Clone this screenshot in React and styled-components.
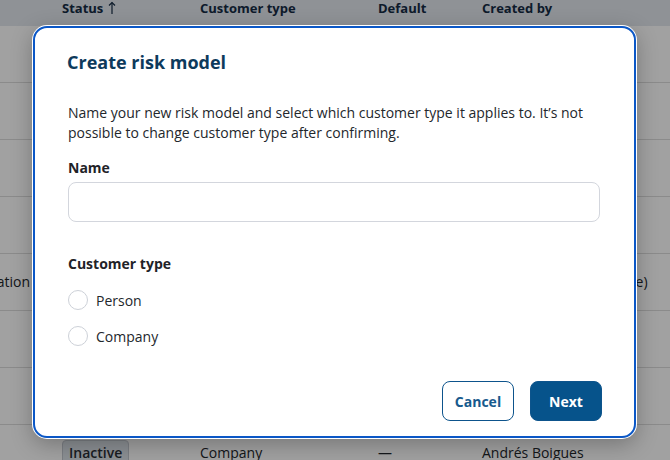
import React from "react";
import styled, { createGlobalStyle } from "styled-components";

const Global = createGlobalStyle`
  html, body { margin: 0; padding: 0; }
  body {
    width: 670px;
    height: 460px;
    overflow: hidden;
    background: #fff;
    font-family: "Open Sans", "Noto Sans", "Liberation Sans", sans-serif;
    color: #1f2328;
  }
  * { box-sizing: border-box; }
`;

const Page = styled.div`
  position: relative;
  width: 670px;
  height: 460px;
  overflow: hidden;
`;

const Table = styled.div`
  display: flex;
  flex-direction: column;
  margin-left: -120px;
  width: 920px;
`;

const cols = "182px 138px 178px 104px 318px";

const HeaderRow = styled.div`
  display: grid;
  grid-template-columns: ${cols};
  align-items: start;
  height: 26px;
  background: #e2e7ee;
  font-size: 13px;
  font-weight: 700;
  line-height: 16px;
  color: #162c44;
`;

const HeadCell = styled.div`
  display: flex;
  align-items: center;
  gap: 5px;
  white-space: nowrap;
`;

const Row = styled.div`
  display: grid;
  grid-template-columns: ${cols};
  align-items: center;
  height: 57px;
  border-bottom: 1px solid #dcdcdc;
  font-size: 14px;
  line-height: 20px;
  color: #22262b;
`;

const Cell = styled.div`
  white-space: nowrap;
  text-align: ${(p) => (p.$lead ? "right" : "left")};
  padding-right: ${(p) => (p.$lead ? "32px" : "0")};
`;

const Badge = styled.span`
  display: inline-block;
  padding: 2px 6px;
  border: 1px solid #c3c8d0;
  border-radius: 4px;
  background: #dde2e9;
  font-size: 14px;
  font-weight: 600;
  line-height: 20px;
  color: #2a2f36;
`;

const Scrim = styled.div`
  position: absolute;
  inset: 0;
  background: rgba(0, 0, 0, 0.37);
`;

const Dialog = styled.div`
  position: absolute;
  left: 33px;
  top: 26px;
  width: 603px;
  height: 412px;
  background: #fff;
  border: 2px solid #0b57c6;
  border-radius: 14px;
  box-shadow: 0 0 0 1px #fff, 0 6px 22px rgba(0, 0, 0, 0.28);
  padding: 22px 34px 15px 32px;
  display: flex;
  flex-direction: column;
`;

const Title = styled.h2`
  margin: 0;
  font-size: 18px;
  line-height: 24px;
  font-weight: 700;
  color: #0d3a5c;
`;

const Intro = styled.p`
  margin: 29px -30px 0 1px;
  font-size: 14px;
  line-height: 20px;
  color: #23272c;
`;

const Label = styled.div`
  font-size: 14px;
  line-height: 20px;
  font-weight: 700;
  color: #1f2328;
  margin-top: ${(p) => p.$top}px;
  margin-left: 1px;
`;

const Input = styled.input`
  margin: 4px 0 0 1px;
  width: calc(100% - 1px);
  height: 40px;
  border: 1px solid #d3d6dd;
  border-radius: 8px;
  padding: 0 12px;
  font: inherit;
  font-size: 14px;
  outline: none;
`;

const RadioList = styled.div`
  display: flex;
  flex-direction: column;
  gap: 12px;
  margin: 14px 0 0 1px;
`;

const RadioRow = styled.label`
  display: flex;
  align-items: center;
  gap: 8px;
  height: 24px;
  font-size: 14px;
  color: #23272c;
`;

const RadioDot = styled.span`
  width: 20px;
  height: 20px;
  border-radius: 50%;
  border: 1px solid #cdd1d8;
  background: #fff;
`;

const Actions = styled.div`
  margin: auto -2px 0 0;
  display: flex;
  justify-content: flex-end;
  gap: 16px;
`;

const Button = styled.button`
  width: 72px;
  height: 40px;
  border-radius: 8px;
  font-family: inherit;
  font-size: 14px;
  font-weight: 700;
  cursor: pointer;
  border: 1px solid #0d548c;
  background: ${(p) => (p.$primary ? "#06538b" : "#fff")};
  color: ${(p) => (p.$primary ? "#fff" : "#175a8d")};
`;

const SortArrow = () => (
  <svg width="8" height="14" viewBox="0 0 8 14" fill="none" stroke="#162c44" strokeWidth="1.2">
    <path d="M4 13V1.5" />
    <path d="M1 4.5L4 1.5L7 4.5" />
  </svg>
);

const rows = [
  { name: "", status: null, type: "", def: "", by: "" },
  { name: "", status: null, type: "", def: "", by: "" },
  { name: "", status: null, type: "", def: "", by: "" },
  { name: "", status: null, type: "", def: "", by: "" },
  { name: "Customer verification", status: null, type: "", def: "", by: "Erika Johansson (Inactive)" },
  { name: "", status: null, type: "", def: "", by: "" },
  { name: "", status: null, type: "", def: "", by: "" },
  { name: "", status: "Inactive", type: "Company", def: "—", by: "Andrés Boigues" },
];

export default function App() {
  return (
    <Page>
      <Global />
      <Table>
        <HeaderRow>
          <HeadCell />
          <HeadCell>
            Status <SortArrow />
          </HeadCell>
          <HeadCell>Customer type</HeadCell>
          <HeadCell>Default</HeadCell>
          <HeadCell>Created by</HeadCell>
        </HeaderRow>
        {rows.map((r, i) => (
          <Row key={i}>
            <Cell $lead>{r.name}</Cell>
            <Cell>{r.status && <Badge>{r.status}</Badge>}</Cell>
            <Cell>{r.type}</Cell>
            <Cell>{r.def}</Cell>
            <Cell>{r.by}</Cell>
          </Row>
        ))}
      </Table>
      <Scrim />
      <Dialog>
        <Title>Create risk model</Title>
        <Intro>
          Name your new risk model and select which customer type it applies to. It’s not
          possible to change customer type after confirming.
        </Intro>
        <Label $top={15}>Name</Label>
        <Input type="text" />
        <Label $top={32}>Customer type</Label>
        <RadioList>
          <RadioRow>
            <RadioDot />
            Person
          </RadioRow>
          <RadioRow>
            <RadioDot />
            Company
          </RadioRow>
        </RadioList>
        <Actions>
          <Button>Cancel</Button>
          <Button $primary>Next</Button>
        </Actions>
      </Dialog>
    </Page>
  );
}
